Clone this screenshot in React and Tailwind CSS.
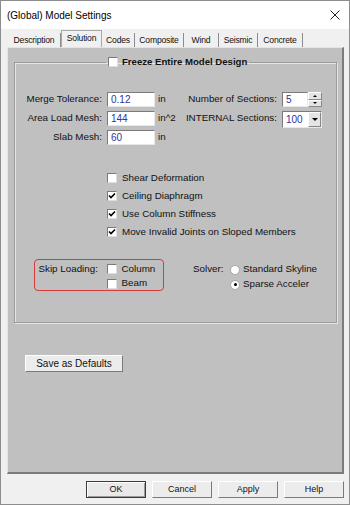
import React from "react";

const Check = ({ checked }) => (
  <div className="w-[10px] h-[10px] bg-white border border-t-[#7a7a7a] border-l-[#7a7a7a] border-r-[#dedede] border-b-[#dedede] flex items-center justify-center shrink-0">
    {checked && (
      <svg width="8" height="8" viewBox="0 0 8 8">
        <path d="M1 3.5 L3 5.5 L7 1.5" stroke="#000" strokeWidth="1.6" fill="none" />
      </svg>
    )}
  </div>
);

const Radio = ({ on }) => (
  <div className="w-[10px] h-[10px] rounded-full bg-white border border-[#a8a8a8] flex items-center justify-center shrink-0">
    {on && <div className="w-[3px] h-[3px] rounded-full bg-black" />}
  </div>
);

const Input = ({ value, w }) => (
  <div className={`${w} h-[15px] bg-white border border-t-[#7a7a7a] border-l-[#7a7a7a] border-r-[#e8e8e8] border-b-[#e8e8e8] flex items-center pl-[3px] text-[#33339a] text-[10px]`}>
    {value}
  </div>
);

const Tab = ({ label, w, active }) => (
  <div
    className={
      active
        ? `${w} h-[17px] border-l border-t border-r border-[#a9a9a9] flex items-center justify-center pb-[2px]`
        : `${w} h-[14px] border-r border-[#8c8c8c] flex items-center justify-center`
    }
  >
    {label}
  </div>
);

export default function App() {
  return (
    <div className="w-[350px] h-[505px] bg-[#f0f0f0] border border-[#8d8d8d] flex flex-col font-['Liberation_Sans',Arial,sans-serif] text-[9.8px] text-[#111]">
      {/* Title bar */}
      <div className="h-[28px] bg-white flex items-center justify-between pl-[6px] pr-[9px] shrink-0">
        <span className="text-[10px] text-black">(Global) Model Settings</span>
        <svg width="10" height="10" viewBox="0 0 10 10">
          <path d="M0.5 0.5 L9.5 9.5 M9.5 0.5 L0.5 9.5" stroke="#222" strokeWidth="1" />
        </svg>
      </div>

      {/* Tabs */}
      <div className="h-[18px] flex items-end pl-[7px] text-[8.6px] tracking-[-0.2px] shrink-0">
        <Tab label="Description" w="w-[53px]" />
        <Tab label="Solution" w="w-[41px]" active />
        <Tab label="Codes" w="w-[33px]" />
        <Tab label="Composite" w="w-[49px]" />
        <Tab label="Wind" w="w-[35px]" />
        <Tab label="Seismic" w="w-[39px]" />
        <Tab label="Concrete" w="w-[45px]" />
      </div>

      {/* Panel */}
      <div className="ml-[6px] w-[337px] h-[427px] bg-[#c0c0c0] border-l border-t border-l-[#e4e4e4] border-t-[#e4e4e4] border-r-2 border-b-2 border-r-[#7c7c7c] border-b-[#7c7c7c] flex flex-col shrink-0">
        <fieldset className="ml-[6px] mt-[8px] w-[323px] h-[267px] border border-[#9b9b9b] shadow-[inset_1px_1px_0_#e6e6e6,1px_1px_0_#e6e6e6] flex flex-col">
          <legend className="ml-[91px] px-[2px] flex items-center h-[12px]">
            <Check />
            <span className="ml-[4px] font-bold text-[9.6px]">Freeze Entire Model Design</span>
          </legend>

          <div className="mt-[24px] flex flex-col gap-[4px]">
            <div className="flex items-center h-[15px]">
              <span className="w-[87px] text-right">Merge Tolerance:</span>
              <div className="ml-[5px]"><Input value="0.12" w="w-[48px]" /></div>
              <span className="ml-[3px] w-[27px]">in</span>
              <span className="w-[92px] text-right whitespace-nowrap">Number of Sections:</span>
              <div className="ml-[5px] flex">
                <Input value="5" w="w-[26px]" />
                <div className="w-[14px] h-[15px] flex flex-col">
                  <div className="h-[7.5px] bg-[#e4e4e4] border border-t-white border-l-white border-r-[#888] border-b-[#888] flex items-center justify-center">
                    <div className="w-0 h-0 border-l-[2px] border-r-[2px] border-b-[2px] border-l-transparent border-r-transparent border-b-black" />
                  </div>
                  <div className="h-[7.5px] bg-[#e4e4e4] border border-t-white border-l-white border-r-[#888] border-b-[#888] flex items-center justify-center">
                    <div className="w-0 h-0 border-l-[2px] border-r-[2px] border-t-[2px] border-l-transparent border-r-transparent border-t-black" />
                  </div>
                </div>
              </div>
            </div>
            <div className="flex items-center h-[15px]">
              <span className="w-[87px] text-right">Area Load Mesh:</span>
              <div className="ml-[5px]"><Input value="144" w="w-[48px]" /></div>
              <span className="ml-[3px] w-[27px]">in^2</span>
              <span className="w-[92px] text-right whitespace-nowrap">INTERNAL Sections:</span>
              <div className="ml-[5px] mt-[2px] w-[40px] h-[17px] bg-white border border-t-[#7a7a7a] border-l-[#7a7a7a] border-r-[#e8e8e8] border-b-[#e8e8e8] flex items-center">
                <span className="flex-1 pl-[3px] text-[#33339a] text-[10px]">100</span>
                <div className="w-[13px] h-full bg-[#e4e4e4] border border-t-white border-l-white border-r-[#888] border-b-[#888] flex items-center justify-center">
                  <div className="w-0 h-0 border-l-[3px] border-r-[3px] border-t-[3px] border-l-transparent border-r-transparent border-t-black" />
                </div>
              </div>
            </div>
            <div className="flex items-center h-[15px]">
              <span className="w-[87px] text-right">Slab Mesh:</span>
              <div className="ml-[5px]"><Input value="60" w="w-[48px]" /></div>
              <span className="ml-[3px] w-[27px]">in</span>
            </div>
          </div>

          <div className="mt-[24px] pl-[92px] flex flex-col">
            {[
              ["Shear Deformation", false],
              ["Ceiling Diaphragm", true],
              ["Use Column Stiffness", true],
              ["Move Invalid Joints on Sloped Members", true],
            ].map(([l, c]) => (
              <div key={l} className="h-[18px] flex items-center">
                <Check checked={c} />
                <span className="ml-[5px]">{l}</span>
              </div>
            ))}
          </div>

          <div className="mt-[18px] flex items-start">
            <div className="ml-[19px] w-[130px] h-[32px] border-[1.5px] border-[#d93b3b] rounded-[4px] flex pl-[3.5px] pt-[1.5px]">
              <span className="w-[68px] h-[15px] flex items-center">Skip Loading:</span>
              <div className="flex flex-col">
                <div className="h-[15px] flex items-center">
                  <Check />
                  <span className="ml-[5px]">Column</span>
                </div>
                <div className="h-[15px] flex items-center">
                  <Check />
                  <span className="ml-[5px]">Beam</span>
                </div>
              </div>
            </div>
            <div className="ml-[29px] mt-[3px] flex">
              <span className="w-[37px] h-[15px] flex items-center">Solver:</span>
              <div className="flex flex-col">
                <div className="h-[15px] flex items-center">
                  <Radio />
                  <span className="ml-[3px]">Standard Skyline</span>
                </div>
                <div className="h-[15px] flex items-center">
                  <Radio on />
                  <span className="ml-[3px]">Sparse Acceler</span>
                </div>
              </div>
            </div>
          </div>
        </fieldset>

        <div className="ml-[17px] mt-[32px] w-[98px] h-[17px] bg-[#ececec] border border-t-white border-l-white border-r-[#7a7a7a] border-b-[#7a7a7a] flex items-center justify-center text-[10px]">
          Save as Defaults
        </div>
      </div>

      {/* Bottom buttons */}
      <div className="mt-[7px] flex justify-end gap-[6px] pr-[5px] text-[9px]">
        <div className="w-[60px] h-[17px] bg-[#e9e9e9] border border-[#3a3a3a] shadow-[inset_1px_1px_0_#fff,inset_-1px_-1px_0_#9a9a9a] flex items-center justify-center">OK</div>
        <div className="w-[60px] h-[17px] bg-[#ececec] border border-t-white border-l-white border-r-[#7a7a7a] border-b-[#7a7a7a] flex items-center justify-center">Cancel</div>
        <div className="w-[60px] h-[17px] bg-[#ececec] border border-t-white border-l-white border-r-[#7a7a7a] border-b-[#7a7a7a] flex items-center justify-center">Apply</div>
        <div className="w-[60px] h-[17px] bg-[#ececec] border border-t-white border-l-white border-r-[#7a7a7a] border-b-[#7a7a7a] flex items-center justify-center">Help</div>
      </div>
    </div>
  );
}
